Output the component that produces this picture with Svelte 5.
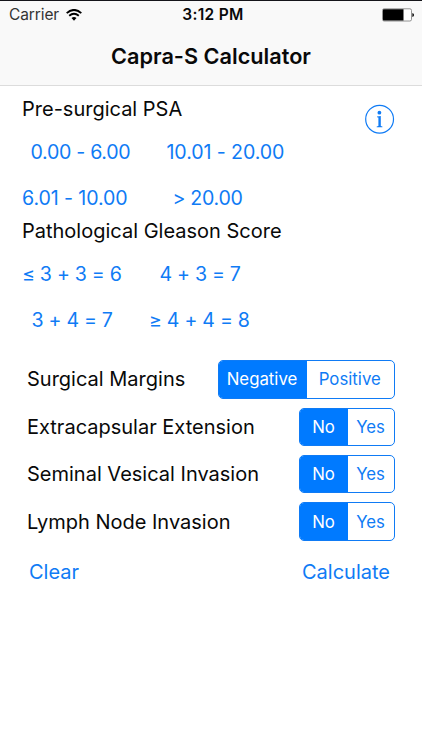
<script>
	let psa = $state(null)
	let gleason = $state(null)

	const psaOptions = [
		{ label: '0.00 - 6.00', name: 'psa_a' },
		{ label: '10.01 - 20.00', name: 'psa_b' },
		{ label: '6.01 - 10.00', name: 'psa_c' },
		{ label: '> 20.00', name: 'psa_d' }
	]

	const gleasonOptions = [
		{ label: '≤ 3 + 3 = 6', name: 'gl_a' },
		{ label: '4 + 3 = 7', name: 'gl_b' },
		{ label: '3 + 4 = 7', name: 'gl_c' },
		{ label: '≥ 4 + 4 = 8', name: 'gl_d' }
	]

	let findings = $state([
		{ label: 'Surgical Margins', name: 'margins', choices: ['Negative', 'Positive'], selected: 0 },
		{ label: 'Extracapsular Extension', name: 'extension', choices: ['No', 'Yes'], selected: 0 },
		{ label: 'Seminal Vesical Invasion', name: 'vesical', choices: ['No', 'Yes'], selected: 0 },
		{ label: 'Lymph Node Invasion', name: 'lymph', choices: ['No', 'Yes'], selected: 0 }
	])

	function clear() {
		psa = null
		gleason = null
		findings.forEach(finding => {
			finding.selected = 0
		})
	}
</script>

<main>
	<header>
		<div class="status_bar">
			<div class="carrier">
				<span class="carrier_name">Carrier</span>
				<svg width="16" height="12" viewBox="0 0 16 12">
					<path d="M0.7 4.1 Q8 -2.3 15.3 4.1" fill="none" stroke="#000" stroke-width="1.9" />
					<path d="M3.2 6.8 Q8 2.6 12.8 6.8" fill="none" stroke="#000" stroke-width="1.8" />
					<path d="M5.5 9.1 Q8 6.9 10.5 9.1 L8 11.7 Z" />
				</svg>
			</div>
			<span class="time">3:12 PM</span>
			<svg class="battery" width="32" height="14" viewBox="0 0 32 14">
				<rect x="0.5" y="0.8" width="29" height="12.2" rx="1.6" fill="#fff" stroke="#777" stroke-width="0.8" />
				<path d="M1.8 1.3 H21.5 V12.5 H1.8 Q1 12.5 1 11.7 V2.1 Q1 1.3 1.8 1.3Z" />
				<path d="M30.4 5 Q32 5.4 32 7 Q32 8.5 30.4 8.9Z" />
			</svg>
		</div>
		<h1>Capra-S Calculator</h1>
	</header>

	<section class="scores">
		<div class="heading_row">
			<h2>Pre-surgical PSA</h2>
			<button class="info" aria-label="Info">
				<svg width="30" height="30" viewBox="0 0 30 30">
					<circle cx="14.6" cy="15.2" r="13.9" fill="none" stroke="#0f7bf5" stroke-width="1.2" />
					<circle cx="14.4" cy="8.7" r="1.9" fill="#0f7bf5" />
					<path d="M12 12.5 L15.8 12.1 V22 L17.4 22.4 V23.2 H11.7 V22.4 L13.4 22 V13.5 L12 13.2Z" fill="#0f7bf5" />
				</svg>
			</button>
		</div>
		<div class="options psa">
			{#each psaOptions as { label, name }}
				<button class={name} aria-pressed={psa === label} onclick={() => (psa = label)}>{label}</button>
			{/each}
		</div>
		<h2 class="gleason_title">Pathological Gleason Score</h2>
		<div class="options gleason">
			{#each gleasonOptions as { label, name }}
				<button class={name} aria-pressed={gleason === label} onclick={() => (gleason = label)}>{label}</button>
			{/each}
		</div>
	</section>

	<section class="findings">
		{#each findings as finding}
			<div class="finding">
				<span>{finding.label}</span>
				<div class="segments" class:wide={finding.name === 'margins'}>
					{#each finding.choices as choice, i}
						<button class:selected={finding.selected === i} onclick={() => (finding.selected = i)}>{choice}</button>
					{/each}
				</div>
			</div>
		{/each}
	</section>

	<footer>
		<button onclick={clear}>Clear</button>
		<button>Calculate</button>
	</footer>
</main>

<style>
	:global(body) {
		background: #fff;
	}

	main {
		width: 422px;
		height: 750px;
		overflow: hidden;
		color: #090909;
		font-family: Inter, 'Liberation Sans', sans-serif;
		font-size: 20px;
	}

	button {
		padding: 0;
		border: 0;
		background: none;
		color: #0f7bf5;
		font: inherit;
		letter-spacing: inherit;
		white-space: nowrap;
	}

	svg {
		display: block;
	}

	header {
		box-sizing: border-box;
		height: 86px;
		border-top: 1px solid #15151a;
		border-bottom: 1px solid #dcdcdc;
		background: #f9f9f9;
	}

	.status_bar {
		display: grid;
		grid-template-columns: 1fr auto 1fr;
		align-items: center;
		height: 27px;
		padding: 0 8px 0 9px;
		font-size: 15.5px;
	}

	.carrier {
		display: flex;
		align-items: center;
		gap: 7px;
	}

	.carrier_name {
		color: #333;
		letter-spacing: -0.1px;
	}

	.time {
		padding-left: 3px;
		font-weight: 600;
		letter-spacing: 0.3px;
	}

	.battery {
		justify-self: end;
	}

	h1 {
		margin: 0;
		font-size: 21.7px;
		font-weight: 600;
		line-height: 56px;
		text-align: center;
	}

	h2 {
		margin: 0;
		font-size: inherit;
		font-weight: 400;
		line-height: 30px;
		white-space: nowrap;
	}

	.scores {
		padding: 8px 27px 0 22px;
	}

	.heading_row {
		display: flex;
		justify-content: space-between;
		height: 35px;
	}

	.info {
		height: 30px;
		margin-top: 10px;
	}

	.options {
		display: grid;
		grid-template-rows: 46px 46px;
		justify-items: start;
		align-items: center;
		font-size: 19.6px;
		letter-spacing: -0.3px;
	}

	.psa {
		grid-template-columns: 144.5px 1fr;
	}

	.psa_a {
		margin-left: 8.5px;
	}

	.psa_b,
	.psa_c {
		letter-spacing: -0.1px;
	}

	.psa_d {
		margin-left: 6px;
	}

	.gleason_title {
		margin: -5px 0 5px;
	}

	.gleason {
		grid-template-columns: 127px 1fr;
	}

	.gl_b {
		margin-left: 10.5px;
	}

	.gl_c {
		margin-left: 9.5px;
	}

	.findings {
		display: flex;
		flex-direction: column;
		gap: 9px;
		padding: 17.3px 27px 0;
	}

	.finding {
		display: flex;
		align-items: center;
		justify-content: space-between;
		height: 38.4px;
	}

	.segments {
		box-sizing: border-box;
		display: grid;
		grid-template-columns: 48px 1fr;
		width: 96px;
		height: 38.4px;
		border: 1px solid #0f7bf5;
		border-radius: 5px;
		overflow: hidden;
		font-size: 16.8px;
	}

	.segments.wide {
		grid-template-columns: 88px 1fr;
		width: 177.5px;
	}

	.segments button {
		padding-right: 1px;
	}

	.segments .selected {
		background: #007aff;
		color: #fff;
	}

	footer {
		display: flex;
		justify-content: space-between;
		padding: 16px 32px 0 29px;
		line-height: 30px;
	}
</style>
